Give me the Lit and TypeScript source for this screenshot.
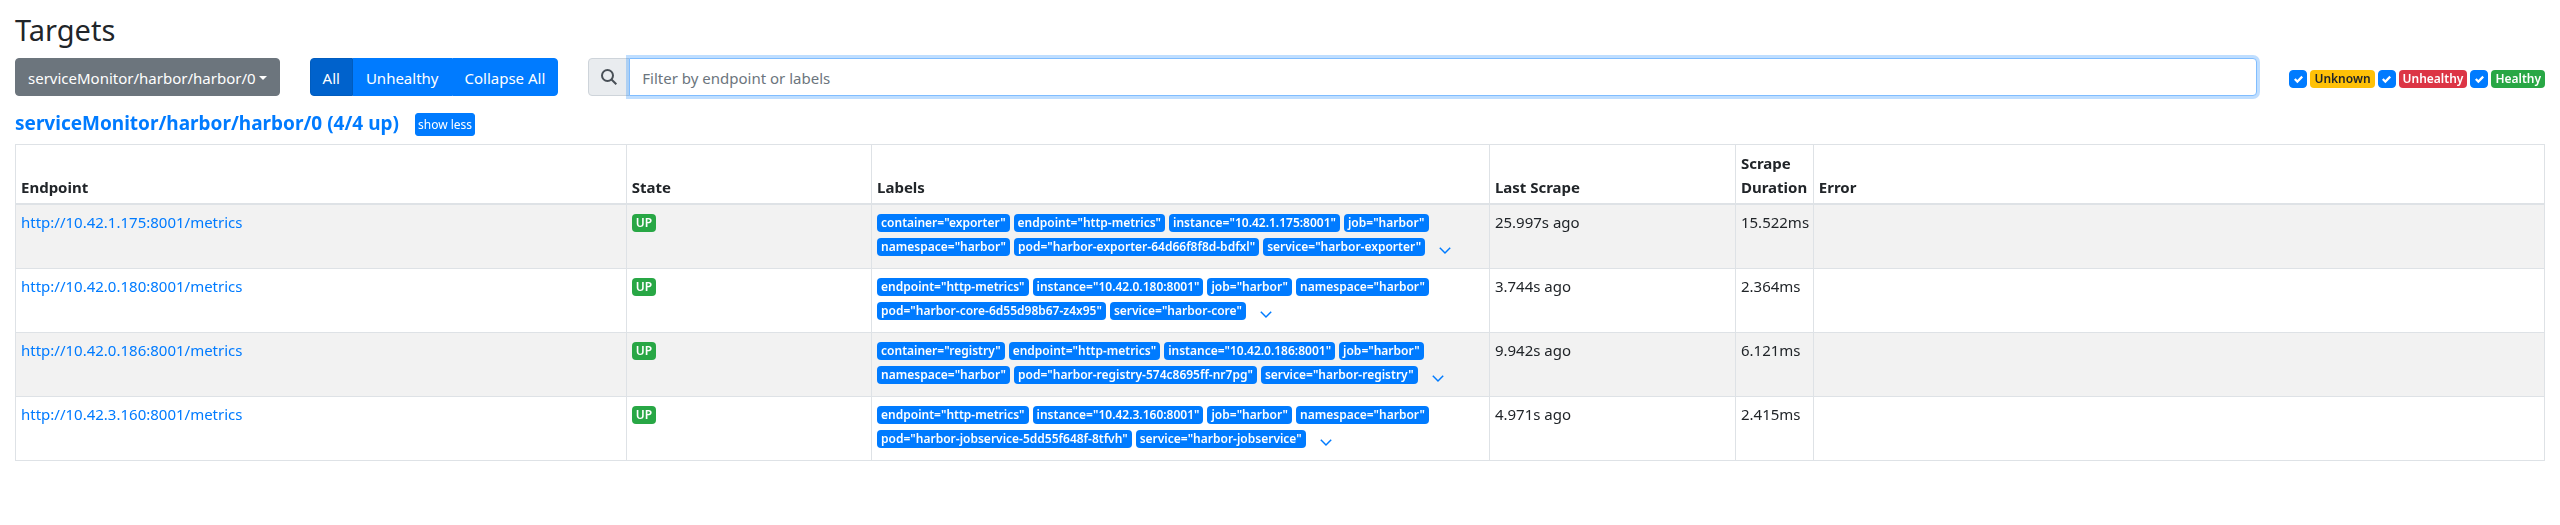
import { LitElement, html, css } from "lit";
import { customElement, property, state, query } from "lit/decorators.js";

interface Target {
  url: string;
  labels: [string, string][];
  lastScrape: string;
  duration: string;
}

const POOL = "serviceMonitor/harbor/harbor/0";

const TARGETS: Target[] = [
  {
    url: "http://10.42.1.175:8001/metrics",
    labels: [
      ["container", "exporter"],
      ["endpoint", "http-metrics"],
      ["instance", "10.42.1.175:8001"],
      ["job", "harbor"],
      ["namespace", "harbor"],
      ["pod", "harbor-exporter-64d66f8f8d-bdfxl"],
      ["service", "harbor-exporter"],
    ],
    lastScrape: "25.997s ago",
    duration: "15.522ms",
  },
  {
    url: "http://10.42.0.180:8001/metrics",
    labels: [
      ["endpoint", "http-metrics"],
      ["instance", "10.42.0.180:8001"],
      ["job", "harbor"],
      ["namespace", "harbor"],
      ["pod", "harbor-core-6d55d98b67-z4x95"],
      ["service", "harbor-core"],
    ],
    lastScrape: "3.744s ago",
    duration: "2.364ms",
  },
  {
    url: "http://10.42.0.186:8001/metrics",
    labels: [
      ["container", "registry"],
      ["endpoint", "http-metrics"],
      ["instance", "10.42.0.186:8001"],
      ["job", "harbor"],
      ["namespace", "harbor"],
      ["pod", "harbor-registry-574c8695ff-nr7pg"],
      ["service", "harbor-registry"],
    ],
    lastScrape: "9.942s ago",
    duration: "6.121ms",
  },
  {
    url: "http://10.42.3.160:8001/metrics",
    labels: [
      ["endpoint", "http-metrics"],
      ["instance", "10.42.3.160:8001"],
      ["job", "harbor"],
      ["namespace", "harbor"],
      ["pod", "harbor-jobservice-5dd55f648f-8tfvh"],
      ["service", "harbor-jobservice"],
    ],
    lastScrape: "4.971s ago",
    duration: "2.415ms",
  },
];

const badge = css`
  .badge {
    display: block;
    width: fit-content;
    padding: 0 4px;
    border-radius: 4px;
    font-size: 12px;
    font-weight: 600;
    line-height: 18px;
    white-space: nowrap;
    color: #fff;
  }
  .primary { background: #007bff; }
  .success { background: #28a745; }
  .danger { background: #dc3545; }
  .warning { background: #ffc107; color: #212529; }
`;

@customElement("health-filter")
class HealthFilter extends LitElement {
  @property() label = "";
  @property() tone = "success";

  static styles = [
    badge,
    css`
      :host { display: block; }
      label { display: flex; align-items: center; gap: 3px; }
      input {
        appearance: none;
        width: 18px;
        height: 18px;
        margin: 0;
        border: 1px solid #adb5bd;
        border-radius: 4px;
        background: #fff;
      }
      input:checked {
        border-color: #007bff;
        background: #007bff url("data:image/svg+xml,%3Csvg xmlns='http://www.w3.org/2000/svg' viewBox='0 0 8 8'%3E%3Cpath fill='%23fff' d='M6.564.75l-3.59 3.612-1.538-1.55L0 4.26l2.974 2.99L8 2.193z'/%3E%3C/svg%3E") center / 9px 9px no-repeat;
      }
    `,
  ];

  render() {
    return html`<label>
      <input type="checkbox" checked />
      <span class="badge ${this.tone}">${this.label}</span>
    </label>`;
  }
}

@customElement("target-table")
class TargetTable extends LitElement {
  @property({ attribute: false }) targets: Target[] = [];

  static styles = [
    badge,
    css`
      :host { display: block; }
      table {
        width: 100%;
        table-layout: fixed;
        border-collapse: collapse;
        border: 1px solid #dee2e6;
      }
      .endpoint { width: 24.15%; }
      .state { width: 9.7%; }
      .labels { width: 24.43%; }
      .last { width: 9.73%; }
      .duration { width: 3.08%; }
      th, td {
        padding: 5px;
        border: 1px solid #dee2e6;
        text-align: left;
        vertical-align: top;
      }
      th {
        padding: 6px 5px 4px;
        vertical-align: bottom;
        border-bottom-width: 2px;
        font-weight: 700;
      }
      tbody tr:nth-child(odd) { background: #f2f2f2; }
      td { padding-bottom: 12px; }
      a { color: #007bff; text-decoration: none; }
      .list { display: flex; flex-wrap: wrap; column-gap: 4px; row-gap: 6px; padding-top: 4px; }
      .more {
        display: flex;
        align-items: flex-end;
        height: 18px;
        margin: 0 0 0 10px;
        padding: 0;
        border: 0;
        background: none;
        color: #007bff;
      }
      .more svg { width: 12px; height: 12px; }
    `,
  ];

  render() {
    return html`<table>
      <colgroup>
        <col class="endpoint" /><col class="state" /><col class="labels" />
        <col class="last" /><col class="duration" /><col />
      </colgroup>
      <thead>
        <tr>
          <th scope="col">Endpoint</th>
          <th scope="col">State</th>
          <th scope="col">Labels</th>
          <th scope="col">Last Scrape</th>
          <th scope="col">Scrape Duration</th>
          <th scope="col">Error</th>
        </tr>
      </thead>
      <tbody>
        ${this.targets.map(
          (t) => html`<tr>
            <td><a href=${t.url}>${t.url}</a></td>
            <td><div class="list"><span class="badge success">UP</span></div></td>
            <td>
              <div class="list">
                ${t.labels.map(([k, v]) => html`<span class="badge primary">${k}="${v}"</span>`)}
                <button class="more" type="button" aria-label="Show discovered labels">
                  <svg viewBox="0 0 12 12" fill="none" stroke="currentColor" stroke-width="1.5">
                    <path d="M.8 3.800 6 9l5.200-5.200" />
                  </svg>
                </button>
              </div>
            </td>
            <td>${t.lastScrape}</td>
            <td>${t.duration}</td>
            <td></td>
          </tr>`
        )}
      </tbody>
    </table>`;
  }
}

@customElement("app-root")
class AppRoot extends LitElement {
  @state() private expanded = true;
  @query("#filter") private filter!: HTMLInputElement;

  static styles = css`
    :host {
      display: block;
      padding: 0 15px;
      background: #fff;
      color: #212529;
      font: 15px/24px "Noto Sans", "Open Sans", sans-serif;
    }
    h2 {
      margin: 0;
      padding: 10px 0 9px;
      font-size: 29px;
      font-weight: 400;
      line-height: 39px;
    }
    button, input { font: inherit; }
    .bar { display: flex; align-items: center; }
    .btn {
      padding: 7px 12px 5px;
      border: 1px solid #007bff;
      border-radius: 4px;
      background: #007bff;
      color: #fff;
    }
    .pool {
      display: flex;
      align-items: center;
      gap: 3px;
      border-color: #6c757d;
      background: #6c757d;
    }
    .caret { border: 4px solid transparent; border-top-color: #fff; border-bottom: 0; }
    .group { display: flex; margin: 0 30px; }
    .group .btn { border-radius: 0; }
    .group .btn:first-child { border-radius: 4px 0 0 4px; }
    .group .btn:last-child { border-radius: 0 4px 4px 0; }
    .group .active { background: #0062cc; border-color: #005cbf; }
    .search { display: flex; flex: 1; }
    .addon {
      display: flex;
      align-items: center;
      padding: 0 12px;
      border: 1px solid #ced4da;
      border-radius: 4px 0 0 4px;
      background: #e9ecef;
      color: #495057;
    }
    .addon svg { width: 16px; height: 16px; }
    .search input {
      flex: 1;
      min-width: 0;
      padding: 7px 12px 5px;
      border: 1px solid #ced4da;
      border-radius: 0 4px 4px 0;
      margin-left: -1px;
      color: #495057;
      outline: 0;
    }
    .search input:focus { border-color: #80bdff; box-shadow: 0 0 0 3px rgba(0, 123, 255, .25); }
    .search input::placeholder { color: #6c757d; }
    .health { display: flex; gap: 3px; margin-left: 32px; padding-top: 4px; }
    .title { display: flex; align-items: center; gap: 16px; padding: 13px 0 7px; }
    h3 { margin: 0; font-size: 19px; line-height: 28px; font-weight: 700; }
    h3 a { color: #007bff; text-decoration: none; }
    .small { margin-top: 2px; padding: 2px; border-radius: 3px; font-size: 12px; line-height: 17px; }
  `;

  firstUpdated() {
    this.filter.focus();
  }

  render() {
    return html`
      <h2>Targets</h2>
      <div class="bar">
        <button class="btn pool" type="button" aria-haspopup="true">${POOL}<span class="caret"></span></button>
        <div class="group" role="group">
          <button class="btn active" type="button">All</button>
          <button class="btn" type="button">Unhealthy</button>
          <button class="btn" type="button">Collapse All</button>
        </div>
        <div class="search">
          <label class="addon" for="filter" aria-label="Filter">
            <svg viewBox="0 0 16 16" fill="none" stroke="currentColor" stroke-width="2">
              <circle cx="6.500" cy="6.500" r="5.500" />
              <path d="M10.500 10.500 15.300 15.300" />
            </svg>
          </label>
          <input id="filter" type="text" placeholder="Filter by endpoint or labels" />
        </div>
        <div class="health">
          <health-filter label="Unknown" tone="warning"></health-filter>
          <health-filter label="Unhealthy" tone="danger"></health-filter>
          <health-filter label="Healthy" tone="success"></health-filter>
        </div>
      </div>
      <div class="title">
        <h3><a href="#pool">${POOL} (4/4 up)</a></h3>
        <button class="btn small" type="button" @click=${() => (this.expanded = !this.expanded)}>
          show ${this.expanded ? "less" : "more"}
        </button>
      </div>
      ${this.expanded ? html`<target-table id="pool" .targets=${TARGETS}></target-table>` : null}
    `;
  }
}
